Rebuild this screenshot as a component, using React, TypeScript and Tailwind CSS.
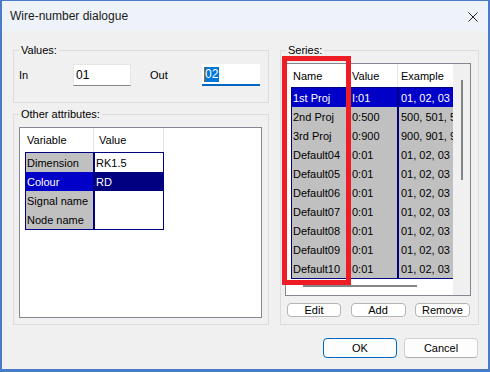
const attributes = [
  { name: 'Dimension', value: 'RK1.5' },
  { name: 'Colour', value: 'RD', selected: true },
  { name: 'Signal name', value: '' },
  { name: 'Node name', value: '' },
];

const series = [
  ['1st Proj', 'I:01', '01, 02, 03'],
  ['2nd Proj', '0:500', '500, 501, 502'],
  ['3rd Proj', '0:900', '900, 901, 902'],
  ['Default04', '0:01', '01, 02, 03'],
  ['Default05', '0:01', '01, 02, 03'],
  ['Default06', '0:01', '01, 02, 03'],
  ['Default07', '0:01', '01, 02, 03'],
  ['Default08', '0:01', '01, 02, 03'],
  ['Default09', '0:01', '01, 02, 03'],
  ['Default10', '0:01', '01, 02, 03'],
];

function GroupBox({ label, className, children }: { label: string; className?: string; children: React.ReactNode }) {
  return (
    <fieldset className={`border border-[#dcdcdc] min-w-0 ${className ?? ''}`}>
      <legend className="ml-[5px] px-[2px] leading-[14px]">{label}</legend>
      {children}
    </fieldset>
  );
}

function SeriesColumn({ col, width, pad }: { col: number; width: string; pad: string }) {
  return (
    <div className={`${width} shrink-0 border border-[#000080] bg-[#c0c0c0] overflow-hidden`}>
      {series.map((row, i) => (
        <div
          key={i}
          className={`h-[19px] ${pad} flex items-center whitespace-nowrap ${i === 0 ? 'bg-[#0000c8] text-white' : ''}`}
        >
          {row[col]}
        </div>
      ))}
    </div>
  );
}

export default function App() {
  return (
    <div className="relative w-[490px] h-[372px] flex flex-col border-x-2 border-t border-b-[3px] border-[#4a7bc8] bg-[#f0f0f0] font-['Liberation_Sans',Arial,sans-serif] text-[11px] leading-[14px] text-black overflow-hidden">
      {/* title bar */}
      <div className="h-[30px] shrink-0 bg-[#eef3f9] flex items-center justify-between pl-[8px] pr-[10px]">
        <span className="text-[12px] text-[#1a1a1a]">Wire-number dialogue</span>
        <svg width="10" height="10" viewBox="0 0 10 10" className="mt-[1px]">
          <path d="M0.5 0.5 L9.5 9.5 M9.5 0.5 L0.5 9.5" stroke="#222" strokeWidth="1" fill="none" />
        </svg>
      </div>

      <div className="flex-1 flex flex-col pl-[11px] pr-[9px] pt-[12px]">
        <div className="flex gap-[11px]">
          {/* left column */}
          <div className="w-[256px] flex flex-col gap-[4px]">
            <GroupBox label="Values:">
              <div className="flex items-center pl-[5px] pt-[7px] pb-[16px]">
                <span className="w-[54px]">In</span>
                <div className="w-[58px] h-[22px] bg-white border border-[#e6e6e6] border-b-[#868686] flex items-center pl-[2px] text-[12px]">
                  01
                </div>
                <span className="ml-[19px] w-[52px]">Out</span>
                <div className="w-[58px] h-[22px] bg-white border-b-2 border-[#0067c0] flex items-center pl-[2px] text-[12px]">
                  <span className="bg-[#0078d7] text-white border-l border-[#c05a00] leading-[15px] pr-[1px]">02</span>
                </div>
              </div>
            </GroupBox>

            <GroupBox label="Other attributes:">
              <div className="pl-[5px] pr-[6px] pt-[6px] pb-[6px]">
                <div className="h-[191px] border border-[#828790] bg-white pl-[5px]">
                  <div className="flex h-[24px]">
                    <div className="w-[69px] border-r border-[#e5e5e5] pl-[2px] flex items-center">Variable</div>
                    <div className="w-[70px] border-r border-[#e5e5e5] pl-[5px] flex items-center">Value</div>
                  </div>
                  <div className="flex">
                    <div className="w-[69px] border border-[#000080] bg-[#c0c0c0]">
                      {attributes.map((a) => (
                        <div
                          key={a.name}
                          className={`h-[19px] pl-[1px] flex items-center ${a.selected ? 'bg-[#0000c8] text-white' : ''}`}
                        >
                          {a.name}
                        </div>
                      ))}
                    </div>
                    <div className="w-[70px] border border-[#000080] bg-white">
                      {attributes.map((a) => (
                        <div
                          key={a.name}
                          className={`h-[19px] pl-[1px] flex items-center ${a.selected ? 'bg-[#000080] text-white' : ''}`}
                        >
                          {a.value}
                        </div>
                      ))}
                    </div>
                  </div>
                </div>
              </div>
            </GroupBox>
          </div>

          {/* series */}
          <GroupBox label="Series:" className="w-[199px]">
            <div className="pl-[4px] pr-[7px] pt-[6px] pb-[6px]">
              <div className="h-[233px] border border-[#828790] bg-white flex">
                <div className="flex-1 min-w-0 overflow-hidden pl-[5px] flex flex-col">
                  <div className="flex h-[23px] shrink-0">
                    <div className="w-[58px] shrink-0 border-r border-[#e5e5e5] pl-[2px] flex items-center">Name</div>
                    <div className="w-[49px] shrink-0 border-r border-[#e5e5e5] pl-[3px] flex items-center">Value</div>
                    <div className="w-[70px] shrink-0 border-r border-[#e5e5e5] pl-[3px] flex items-center">Example</div>
                  </div>
                  <div className="flex">
                    <SeriesColumn col={0} width="w-[58px]" pad="pl-[1px]" />
                    <SeriesColumn col={1} width="w-[49px]" pad="pl-[2px]" />
                    <SeriesColumn col={2} width="w-[70px]" pad="pl-[2px]" />
                  </div>
                  <div className="mt-[6px] ml-[12px] w-[114px] h-[2px] bg-[#858585]" />
                </div>
                <div className="w-[17px] shrink-0 bg-[#f0f0f0] pt-[16px] pl-[8px]">
                  <div className="w-[2px] h-[100px] bg-[#858585]" />
                </div>
              </div>
              <div className="flex justify-between pl-[2px] pr-[1px] mt-[7px]">
                <button className="w-[54px] h-[14px] rounded-[4px] border border-[#b5b5b5] bg-white text-[11px] leading-[12px]">Edit</button>
                <button className="w-[55px] h-[14px] rounded-[4px] border border-[#b5b5b5] bg-white text-[11px] leading-[12px]">Add</button>
                <button className="w-[55px] h-[14px] rounded-[4px] border border-[#b5b5b5] bg-white text-[11px] leading-[12px]">Remove</button>
              </div>
            </div>
          </GroupBox>
        </div>

        <div className="flex justify-end gap-[7px] mt-[13px] mr-[1px]">
          <button className="w-[74px] h-[20px] rounded-[4px] border border-[#0067c0] bg-[#fdfdfd] text-[11px]">OK</button>
          <button className="w-[74px] h-[20px] rounded-[4px] border border-[#d0d0d0] border-b-[#b0b0b0] bg-[#fdfdfd] text-[11px]">Cancel</button>
        </div>
      </div>

      {/* red highlight around the Name column */}
      <div className="absolute left-[280px] top-[55px] w-[69px] h-[229px] border-[5px] border-[#ee1c25] pointer-events-none" />
    </div>
  );
}
